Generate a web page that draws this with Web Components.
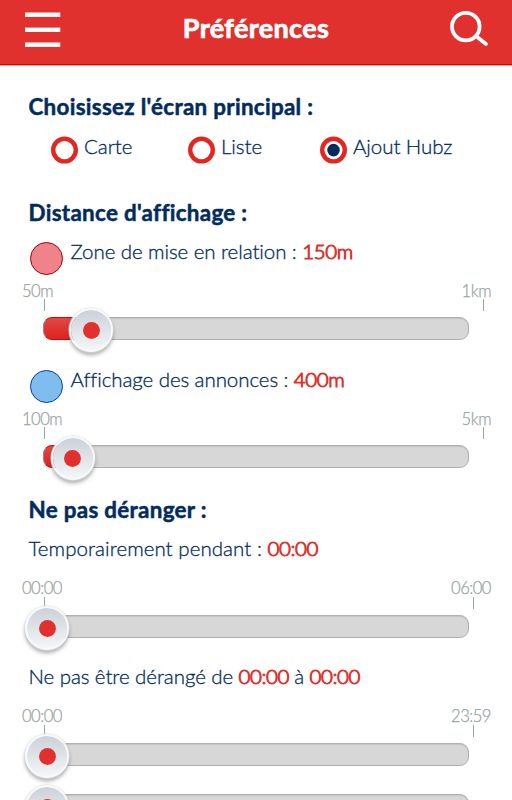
<!DOCTYPE html>
<html lang="fr">
<head>
<meta charset="utf-8">
<title>Préférences</title>
<style>
  html, body {
    margin: 0;
    height: 800px;
    overflow: hidden;
  }

  body {
    background: #fff;
    color: #022c5e;
    font-family: Lato, "Open Sans", sans-serif;
    font-size: 20.5px;
    font-weight: 300;
    font-variant-ligatures: none;
  }
</style>
</head>
<body>

<prefs-page>
  <app-bar slot="bar">Préférences</app-bar>

  <pref-section heading="Choisissez l'écran principal :">
    <radio-group>
      <radio-option style="width: 137px">Carte</radio-option>
      <radio-option style="width: 132px">Liste</radio-option>
      <radio-option checked>Ajout Hubz</radio-option>
    </radio-group>
  </pref-section>

  <pref-section heading="Distance d'affichage :">
    <pref-row dot="red">Zone de mise en relation : <pref-value>150m</pref-value></pref-row>
    <range-slider min="50m" max="1km" value="48"></range-slider>
    <pref-row dot="blue">Affichage des annonces : <pref-value>400m</pref-value></pref-row>
    <range-slider min="100m" max="5km" value="29.5"></range-slider>
  </pref-section>

  <pref-section heading="Ne pas déranger :" style="--heading-line: 27px; --row-line: 25px">
    <pref-row style="letter-spacing: 0.05px">Temporairement pendant : <pref-value>00:00</pref-value></pref-row>
    <range-slider min="00:00" max="06:00" value="4" time></range-slider>
    <pref-row>Ne pas être dérangé de <pref-value>00:00</pref-value> à <pref-value>00:00</pref-value></pref-row>
    <range-slider min="00:00" max="23:59" value="4" time></range-slider>
    <range-slider value="4" time></range-slider>
  </pref-section>
</prefs-page>

<script>
  function attach(el, html) {
    const tmpl = document.createElement('template')
    tmpl.innerHTML = html
    el.attachShadow({ mode: 'open' }).appendChild(tmpl.content.cloneNode(true))
  }

  class PrefsPage extends HTMLElement {
    constructor() {
      super()
      attach(this, `
        <style>
          :host { display: block; height: 800px; overflow: hidden; }
          main { display: flex; flex-direction: column; padding-top: 26px; }
        </style>
        <slot name="bar"></slot>
        <main><slot></slot></main>
      `)
    }
  }

  class AppBar extends HTMLElement {
    constructor() {
      super()
      attach(this, `
        <style>
          :host {
            display: flex;
            box-sizing: border-box;
            height: 66px;
            padding: 0 23px 0 25px;
            justify-content: space-between;
            background: #e0312e;
            border-bottom: 1px solid #f3a5a3;
            box-shadow: inset 0 -1px #e00000;
            color: #fff;
          }
          svg { display: block; flex: none; }
          h1 {
            margin: 11px 0 0 2px;
            font-size: 27px;
            line-height: 34px;
            font-weight: 700;
            letter-spacing: 0.35px;
            -webkit-text-stroke: 0.7px;
            white-space: nowrap;
          }
        </style>
        <svg width="36" height="60" viewBox="0 0 36 60" fill="currentColor">
          <rect y="12.5" width="35.3" height="4.4"/>
          <rect y="27.6" width="35.3" height="4.4"/>
          <rect y="42.5" width="35.3" height="4.4"/>
        </svg>
        <h1><slot></slot></h1>
        <svg width="40" height="60" viewBox="0 0 40 60" fill="none" stroke="currentColor" stroke-width="3.8">
          <circle cx="16.8" cy="26.6" r="13.8"/>
          <path d="M27.2 36.3L37 43.9" stroke-linecap="round"/>
        </svg>
      `)
    }
  }

  class PrefSection extends HTMLElement {
    constructor() {
      super()
      attach(this, `
        <style>
          :host { display: block; }
          h2 {
            margin: 0 0 12px 28.5px;
            font-size: 22.4px;
            line-height: var(--heading-line, 29px);
            height: 28px;
            font-weight: 700;
            letter-spacing: 0.3px;
            -webkit-text-stroke: 0.5px;
          }
        </style>
        <h2></h2>
        <slot></slot>
      `)
      this.shadowRoot.querySelector('h2').textContent = this.getAttribute('heading')
    }
  }

  class RadioGroup extends HTMLElement {
    constructor() {
      super()
      attach(this, `
        <style>
          :host {
            display: flex;
            box-sizing: border-box;
            height: 66px;
            padding: 1px 0 0 51px;
          }
        </style>
        <slot></slot>
      `)
    }
  }

  class RadioOption extends HTMLElement {
    constructor() {
      super()
      attach(this, `
        <style>
          :host {
            display: flex;
            flex: none;
            align-items: flex-start;
            line-height: 26px;
            letter-spacing: -0.06px;
            white-space: nowrap;
            -webkit-text-stroke: 0.3px;
          }
          svg { display: block; flex: none; margin: 3px 6px 0 0; }
          .mark { display: none; }
          :host([checked]) .mark { display: block; }
        </style>
        <svg width="27" height="28" viewBox="0 0 27 28">
          <circle cx="13.5" cy="14.1" r="11.3" fill="#fff" stroke="#e42620" stroke-width="4.4"/>
          <circle class="mark" cx="13.5" cy="14.1" r="6.3" fill="#022c5e"/>
        </svg>
        <slot></slot>
      `)
    }
  }

  class PrefRow extends HTMLElement {
    constructor() {
      super()
      attach(this, `
        <style>
          :host {
            display: flex;
            height: 42px;
            padding-left: 28.5px;
            line-height: var(--row-line, 27px);
            letter-spacing: -0.08px;
            white-space: nowrap;
            -webkit-text-stroke: 0.3px;
          }
          i { display: none; }
          :host([dot]) i {
            display: block;
            box-sizing: border-box;
            flex: none;
            width: 33px;
            height: 33px;
            margin: 4px 8px 0 1px;
            border-radius: 50%;
          }
          :host([dot="red"]) i { background: #f0838a; border: 1px solid #a00008; }
          :host([dot="blue"]) i { background: #80bdef; border: 1px solid #0040a0; }
        </style>
        <i></i>
        <span><slot></slot></span>
      `)
    }
  }

  class PrefValue extends HTMLElement {
    constructor() {
      super()
      attach(this, `
        <style>
          :host {
            color: #e0312e;
            letter-spacing: -0.4px;
            -webkit-text-stroke: 1px;
          }
        </style>
        <slot></slot>
      `)
    }
  }

  class RangeSlider extends HTMLElement {
    constructor() {
      super()
      attach(this, `
        <style>
          :host { display: block; margin-bottom: 26px; }
          :host(:last-child) { margin-bottom: 28px; }
          :host(:not([min])) { margin-top: 28px; }
          :host(:not([min])) .scale { display: none; }
          .labels {
            display: flex;
            justify-content: space-between;
            padding: 0 21px 0 22px;
            font-size: 16.6px;
            line-height: 22px;
            height: 19px;
            letter-spacing: -0.5px;
            -webkit-text-stroke: 0.25px;
            color: #95a5a1;
          }
          :host([time]) .labels { line-height: 20px; }
          .ticks {
            display: flex;
            justify-content: space-between;
            height: 12px;
            margin-bottom: 6px;
            padding: 0 28px 0 44px;
          }
          :host([time]) .ticks { padding-right: 38px; }
          .ticks i { width: 1px; background: #95a5a1; }
          .track {
            position: relative;
            box-sizing: border-box;
            width: 426px;
            height: 23px;
            margin-left: 43px;
            border: 1px solid #b0b0b0;
            border-radius: 9px;
            background: #d7d7d7;
            box-shadow: inset 0 1px 1px #c4c4c4;
          }
          .fill {
            box-sizing: border-box;
            height: 23px;
            margin: -1px;
            border: 1px solid #e00000;
            border-left-color: #a98080;
            border-radius: 9px 0 0 9px;
            background: linear-gradient(#e04a47, #e0312e 60%, #de2522);
          }
          .knob {
            position: absolute;
            top: -10px;
            display: flex;
            align-items: center;
            justify-content: center;
            box-sizing: border-box;
            width: 44px;
            height: 44px;
            margin-left: -23px;
            border-radius: 50%;
            border: 2px solid #f7f8f9;
            background: linear-gradient(#cbd1da, #f4f6f7) padding-box;
            box-shadow: 0 0 1px 0.5px #dcdcdc, 0 2px 1px 0 #c4c4c4, 0 3px 4px rgba(0, 0, 0, .35);
          }
          .knob::before {
            content: "";
            width: 17px;
            height: 17px;
            border-radius: 50%;
            background: #e0312e;
            box-shadow: 0 1px #fff;
          }
        </style>
        <div class="scale labels"><span></span><span></span></div>
        <div class="scale ticks"><i></i><i></i></div>
        <div class="track"><div class="fill"></div><div class="knob"></div></div>
      `)
      const root = this.shadowRoot
      const value = this.getAttribute('value')
      const labels = root.querySelectorAll('.labels span')
      labels[0].textContent = this.getAttribute('min')
      labels[1].textContent = this.getAttribute('max')
      root.querySelector('.fill').style.width = value + 'px'
      root.querySelector('.knob').style.left = value + 'px'
    }
  }

  customElements.define('prefs-page', PrefsPage)
  customElements.define('app-bar', AppBar)
  customElements.define('pref-section', PrefSection)
  customElements.define('radio-group', RadioGroup)
  customElements.define('radio-option', RadioOption)
  customElements.define('pref-row', PrefRow)
  customElements.define('pref-value', PrefValue)
  customElements.define('range-slider', RangeSlider)
</script>
</body>
</html>
